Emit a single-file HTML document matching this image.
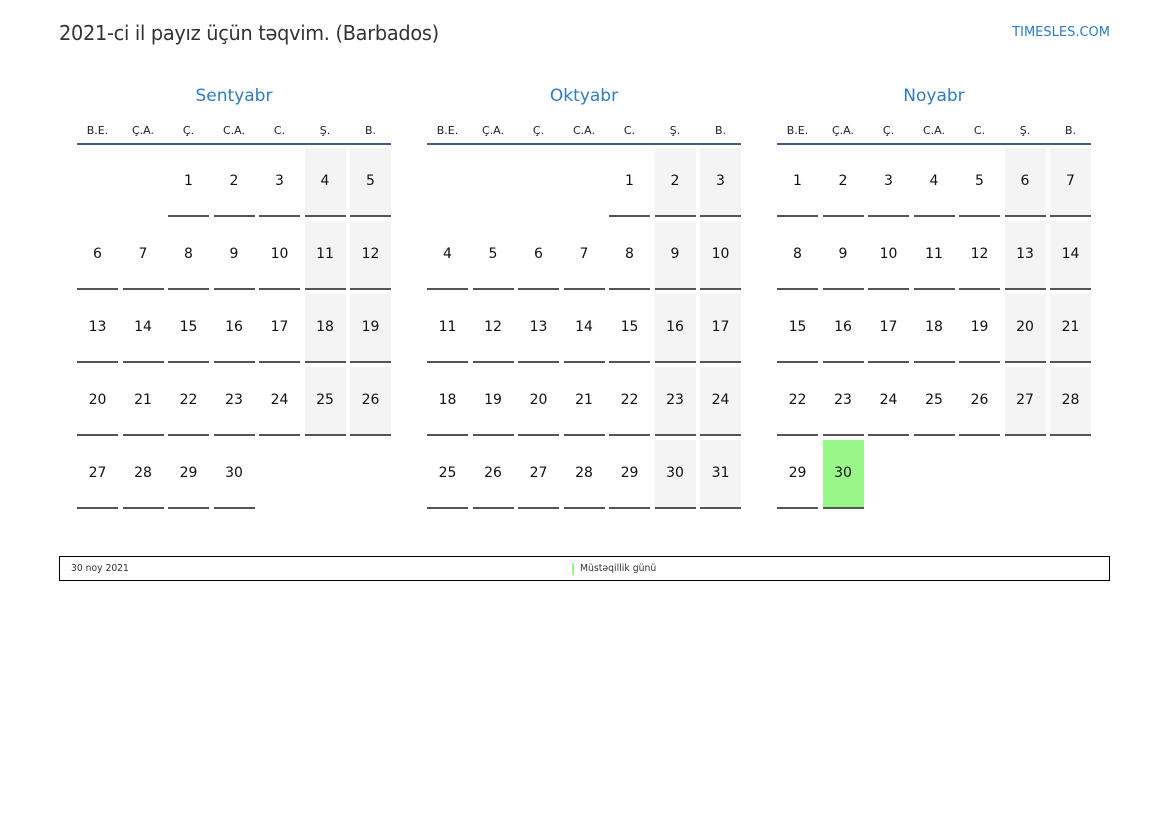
<!DOCTYPE html>
<html><head><meta charset="utf-8"><style>
body{margin:0;width:1169px;height:827px;background:#fff;font-family:"DejaVu Sans","Liberation Sans",sans-serif;position:relative;overflow:hidden}
.title{position:absolute;left:59px;top:21px;font-size:20px;color:#333;letter-spacing:-0.3px;transform:scaleX(0.965);transform-origin:left;white-space:nowrap}
.site{position:absolute;right:59px;top:25px;font-size:13px;color:#2f7bc4}
.m{position:absolute;top:85px;width:314px}
.mn{text-align:center;font-size:17px;color:#2f7bc4;height:22px;line-height:22px}
.hd{display:grid;grid-template-columns:repeat(7,41px);column-gap:4.5px;margin-top:12px;height:24px;border-bottom:2px solid #3d5f8f;font-size:11px;color:#222;text-align:center;line-height:24px}
.g{display:grid;grid-template-columns:repeat(7,41px);column-gap:4.5px;row-gap:4px;margin-top:3px}
.g div{height:67px;line-height:67px;text-align:center;font-size:14px;color:#111;border-bottom:2px solid #555}
.g div.e{border-bottom:2px solid transparent}
.g div.w{background:#f4f4f4}
.g div.h{background:#99f78a}
.leg{position:absolute;left:59px;top:556px;width:1049px;height:23px;border:1px solid #000;font-size:10px;color:#333;line-height:23px}
</style></head><body>
<div class="title">2021-ci il payız üçün təqvim. (Barbados)</div>
<div class="site">TIMESLES.COM</div>

<div class="m" style="left:77px">
<div class="mn">Sentyabr</div>
<div class="hd"><span>B.E.</span><span>Ç.A.</span><span>Ç.</span><span>C.A.</span><span>C.</span><span>Ş.</span><span>B.</span></div>
<div class="g">
<div class="e"></div><div class="e"></div><div>1</div><div>2</div><div>3</div><div class="w">4</div><div class="w">5</div>
<div>6</div><div>7</div><div>8</div><div>9</div><div>10</div><div class="w">11</div><div class="w">12</div>
<div>13</div><div>14</div><div>15</div><div>16</div><div>17</div><div class="w">18</div><div class="w">19</div>
<div>20</div><div>21</div><div>22</div><div>23</div><div>24</div><div class="w">25</div><div class="w">26</div>
<div>27</div><div>28</div><div>29</div><div>30</div>
</div></div>

<div class="m" style="left:427px">
<div class="mn">Oktyabr</div>
<div class="hd"><span>B.E.</span><span>Ç.A.</span><span>Ç.</span><span>C.A.</span><span>C.</span><span>Ş.</span><span>B.</span></div>
<div class="g">
<div class="e"></div><div class="e"></div><div class="e"></div><div class="e"></div><div>1</div><div class="w">2</div><div class="w">3</div>
<div>4</div><div>5</div><div>6</div><div>7</div><div>8</div><div class="w">9</div><div class="w">10</div>
<div>11</div><div>12</div><div>13</div><div>14</div><div>15</div><div class="w">16</div><div class="w">17</div>
<div>18</div><div>19</div><div>20</div><div>21</div><div>22</div><div class="w">23</div><div class="w">24</div>
<div>25</div><div>26</div><div>27</div><div>28</div><div>29</div><div class="w">30</div><div class="w">31</div>
</div></div>

<div class="m" style="left:777px">
<div class="mn">Noyabr</div>
<div class="hd"><span>B.E.</span><span>Ç.A.</span><span>Ç.</span><span>C.A.</span><span>C.</span><span>Ş.</span><span>B.</span></div>
<div class="g">
<div>1</div><div>2</div><div>3</div><div>4</div><div>5</div><div class="w">6</div><div class="w">7</div>
<div>8</div><div>9</div><div>10</div><div>11</div><div>12</div><div class="w">13</div><div class="w">14</div>
<div>15</div><div>16</div><div>17</div><div>18</div><div>19</div><div class="w">20</div><div class="w">21</div>
<div>22</div><div>23</div><div>24</div><div>25</div><div>26</div><div class="w">27</div><div class="w">28</div>
<div>29</div><div class="h">30</div>
</div></div>

<div class="leg"><span style="position:absolute;left:11px;transform:scaleX(0.92);transform-origin:left">30 noy 2021</span><span style="position:absolute;left:512px;top:6px;width:2px;height:12px;background:#99f78a"></span><span style="position:absolute;left:520px;transform:scaleX(0.93);transform-origin:left">Müstəqillik günü</span></div>
</body></html>
